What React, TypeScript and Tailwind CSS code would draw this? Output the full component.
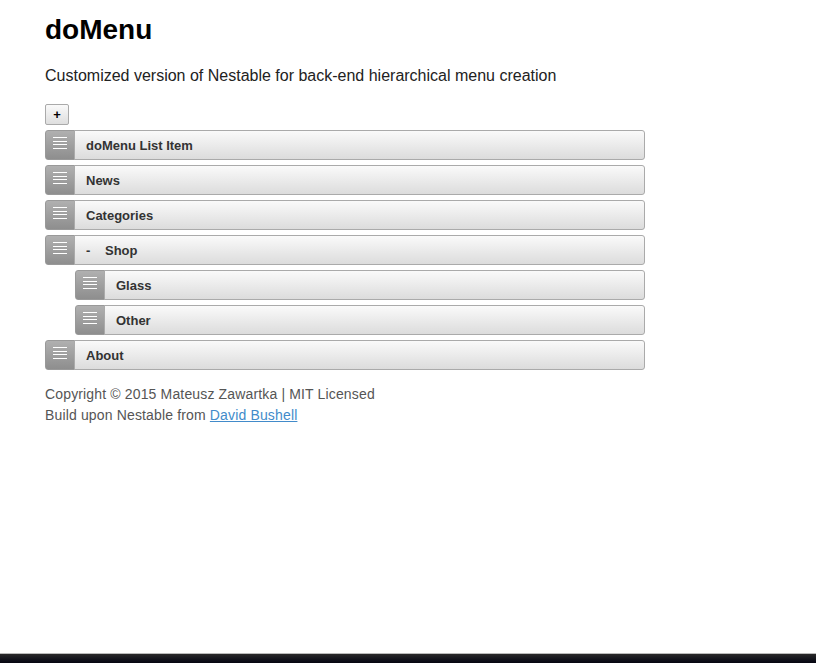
import React from 'react';

interface MenuItem {
  label: string;
  depth: number;
  collapse?: boolean;
}

const items: MenuItem[] = [
  { label: 'doMenu List Item', depth: 0 },
  { label: 'News', depth: 0 },
  { label: 'Categories', depth: 0 },
  { label: 'Shop', depth: 0, collapse: true },
  { label: 'Glass', depth: 1 },
  { label: 'Other', depth: 1 },
  { label: 'About', depth: 0 },
];

const Handle: React.FC = () => (
  <div className="w-[30px] h-[30px] shrink-0 rounded-l-[3px] border border-[#999] bg-gradient-to-b from-[#b0b0b0] to-[#8e8e8e] flex items-center justify-center">
    <svg width="14" height="28" viewBox="0 0 14 28">
      <rect x="0" y="6" width="14" height="1" fill="#fff" />
      <rect x="0" y="10" width="14" height="1" fill="#fff" />
      <rect x="0" y="13" width="14" height="1" fill="#fff" />
      <rect x="0" y="17" width="14" height="1" fill="#fff" />
    </svg>
  </div>
);

const Row: React.FC<{ item: MenuItem }> = ({ item }) => (
  <div className={`flex h-[30px] mb-[5px] ${item.depth === 1 ? 'ml-[30px]' : ''}`}>
    <Handle />
    <div className="flex-1 h-[30px] -ml-px border border-[#aaa] rounded-r-[3px] bg-gradient-to-b from-[#fafafa] to-[#dcdcdc] flex items-center pl-[11px] pt-px text-[13px] font-bold text-[#333]">
      {item.collapse && <span className="w-[19px]">-</span>}
      {item.label}
    </div>
  </div>
);

export default function App() {
  return (
    <div className="h-screen flex flex-col bg-white font-['Liberation_Sans',Arial,sans-serif]">
      <div className="flex-1 pl-[45px] pt-[13px]">
        <h1 className="text-[28px] leading-[34px] font-bold text-black">doMenu</h1>
        <p className="mt-[19px] text-[16px] leading-[20px] text-[#222]">
          Customized version of Nestable for back-end hierarchical menu creation
        </p>
        <div className="w-[600px] mt-[18px]">
          <button className="w-[24px] h-[21px] mb-[5px] border border-[#aaa] rounded-[2px] bg-gradient-to-b from-[#fafafa] to-[#dedede] text-[13px] font-bold leading-none text-black flex items-center justify-center">
            +
          </button>
          {items.map((item) => (
            <Row key={item.label} item={item} />
          ))}
        </div>
        <div className="mt-[14px] text-[14px] leading-[21px] tracking-[0.15px] text-[#555]">
          <p>Copyright © 2015 Mateusz Zawartka | MIT Licensed</p>
          <p>
            Build upon Nestable from{' '}
            <a href="#" className="text-[#428bca] underline">David Bushell</a>
          </p>
        </div>
      </div>
      <div className="h-px bg-[#bbb]" />
      <div className="h-[9px] bg-gradient-to-b from-[#2a2a2a] to-[#050510]" />
    </div>
  );
}
